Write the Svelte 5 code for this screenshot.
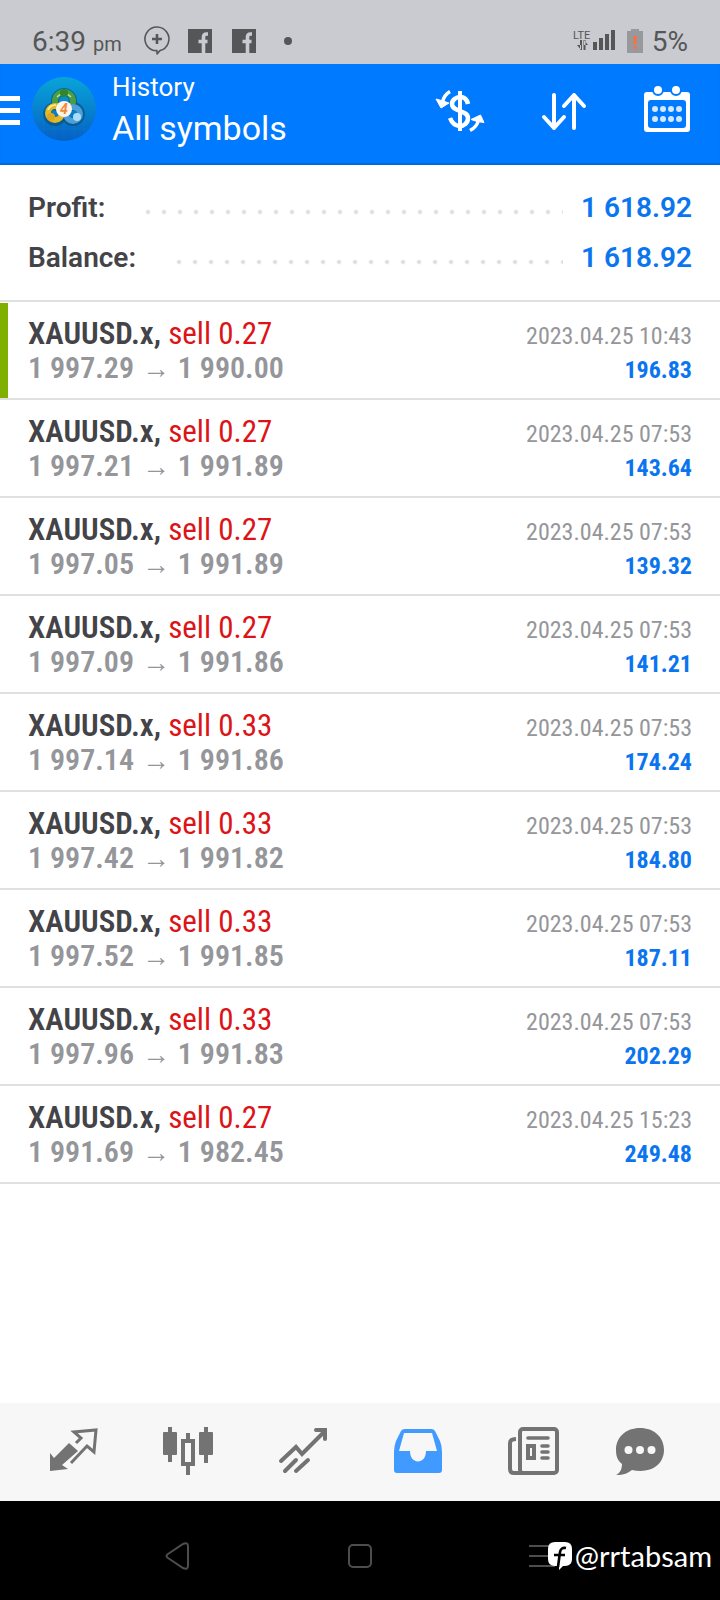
<script lang="ts">
    const totals = [
        { label: "Profit:", value: "1 618.92" },
        { label: "Balance:", value: "1 618.92" }
    ];

    const deals = [
        { volume: "0.27", open: "1 997.29", close: "1 990.00", time: "2023.04.25 10:43", profit: "196.83", fresh: true },
        { volume: "0.27", open: "1 997.21", close: "1 991.89", time: "2023.04.25 07:53", profit: "143.64" },
        { volume: "0.27", open: "1 997.05", close: "1 991.89", time: "2023.04.25 07:53", profit: "139.32" },
        { volume: "0.27", open: "1 997.09", close: "1 991.86", time: "2023.04.25 07:53", profit: "141.21" },
        { volume: "0.33", open: "1 997.14", close: "1 991.86", time: "2023.04.25 07:53", profit: "174.24" },
        { volume: "0.33", open: "1 997.42", close: "1 991.82", time: "2023.04.25 07:53", profit: "184.80" },
        { volume: "0.33", open: "1 997.52", close: "1 991.85", time: "2023.04.25 07:53", profit: "187.11" },
        { volume: "0.33", open: "1 997.96", close: "1 991.83", time: "2023.04.25 07:53", profit: "202.29" },
        { volume: "0.27", open: "1 991.69", close: "1 982.45", time: "2023.04.25 15:23", profit: "249.48" }
    ];
</script>

{#snippet facebook()}
    <svg width="24" height="24" viewBox="0 0 24 24">
        <path d="M0 0h24v24H0z" fill="#555657" />
        <path d="M20 5h-1.500q-3 0-3 3v16M10.500 12.500h9" fill="none" stroke="#c9cbd0" stroke-width="3.600" />
    </svg>
{/snippet}

<div class="screen">
    <div class="status">
        <span class="clock">6:39 <small>pm</small></span>
        <svg class="plus" width="26" height="30" viewBox="0 0 26 30" fill="none" stroke="#555657" stroke-width="2">
            <path d="M9.500 24.500A12 12 0 1 1 16 24.600L13 28v-3.400z" stroke-linejoin="round" stroke-width="1.600" />
            <path d="M13 8v10M8 13h10" stroke-width="2.600" />
        </svg>
        {@render facebook()}
        {@render facebook()}
        <i class="dot"></i>
        <span class="spacer"></span>
        <svg class="signal" width="43" height="22" viewBox="0 0 43 22" fill="#555657">
            <text x="0" y="9" font-size="11" font-family="Roboto, sans-serif">LTE</text>
            <path d="M7 10h2v10H7zM4 15l4 5v-5zM10.500 10h2v10h-2zM15 15l-4-5v5z" />
            <path d="M20 12h4v8h-4zM26 8h4v12h-4zM32 4h4v16h-4zM38 0h4v20h-4z" />
        </svg>
        <svg class="battery" width="16" height="24" viewBox="0 0 16 24">
            <path d="M4 0h8v2h4v22H0V2h4z" fill="#98999c" />
            <path d="M6.500 7h3v8h-3zM6.500 17h3v3h-3z" fill="#ff6e40" />
        </svg>
        <span class="percent">5%</span>
    </div>

    <header>
        <button class="menu" aria-label="Menu">
            <svg width="20" height="29" viewBox="0 0 20 29"><path d="M0 0h20v5H0zM0 12h20v5H0zM0 24h20v5H0z" fill="#fff" /></svg>
        </button>
        <svg class="logo" width="64" height="64" viewBox="0 0 64 64">
            <defs>
                <linearGradient id="sky" x1="0" y1="0" x2="0" y2="1">
                    <stop offset="0" stop-color="#08a5d8" />
                    <stop offset="1" stop-color="#0560c4" />
                </linearGradient>
            </defs>
            <circle cx="32" cy="32" r="32" fill="url(#sky)" />
            <path d="M12 8v48M22 3v58M32 0v64M42 3v58M52 8v48M8 12h48M3 22h58M0 32h64M3 42h58M8 52h48" stroke="#2b9fe0" stroke-opacity=".12" />
            <g fill="none" stroke="#0b4b6b" stroke-opacity=".6" stroke-width="8">
                <circle cx="32" cy="24" r="9" />
                <circle cx="23" cy="37" r="8" />
                <circle cx="41" cy="37" r="8" />
            </g>
            <g fill="none" stroke-width="6">
                <circle cx="32" cy="24" r="9" stroke="#4a9c45" />
                <circle cx="23" cy="36" r="7" stroke="#dfbb2a" />
                <circle cx="41" cy="37" r="7" stroke="#4c9fd8" />
            </g>
            <path d="M25 20q7-7 14 0" fill="none" stroke="#b5e38c" stroke-width="1.500" />
            <path d="M16 33q2-5 8-5" fill="none" stroke="#fff09a" stroke-width="1.500" />
            <circle cx="32" cy="16" r="4" fill="#2f8530" />
            <circle cx="19" cy="40" r="4" fill="#e0a51c" />
            <circle cx="45" cy="40" r="4" fill="#a9dcfa" />
            <circle cx="32" cy="32" r="8" fill="#fff4e6" />
            <text x="32" y="37" text-anchor="middle" font-size="14" font-weight="700" font-style="italic" font-family="Roboto, sans-serif" fill="#ef8a3c">4</text>
        </svg>
        <div class="title">
            <span>History</span>
            <h1>All symbols</h1>
        </div>
        <button class="tool" aria-label="Symbol">
            <svg width="48" height="48" viewBox="0 0 48 48" fill="none" stroke="#fff">
                <path d="M24 4v40" stroke-width="4" />
                <path d="M32 17C31 12 28 10 24 10s-8 3-8 7c0 8 16 6 16 14 0 5-4 8-8 8-5 0-8-3-10-8" stroke-width="4.500" />
                <path d="M14 4.500Q8 8 6.500 15" stroke-width="3.500" />
                <path d="M0 12l5 9 8-5-6-2z" fill="#fff" stroke="#fff" stroke-width="1" />
                <path d="M34 43.500Q41 40 42.500 33" stroke-width="3.500" />
                <path d="M48 35.500L44.500 28l-9.500 4.500 6 2z" fill="#fff" stroke="#fff" stroke-width="1" />
            </svg>
        </button>
        <button class="tool" aria-label="Sort">
            <svg width="48" height="48" viewBox="0 0 48 48" fill="none" stroke="#fff" stroke-width="4" stroke-linecap="round" stroke-linejoin="round">
                <path d="M14 8v33M4 30l10 11 10-11M34 41V8M24 19L34 8l10 11" />
            </svg>
        </button>
        <button class="tool" aria-label="Period">
            <svg width="48" height="48" viewBox="0 0 48 48">
                <rect x="0" y="5" width="46" height="40" rx="3" fill="#fff" />
                <rect x="4" y="13" width="38" height="28" rx="3" fill="#007aff" />
                <g fill="#fff" stroke="#007aff" stroke-width="2">
                    <circle cx="14" cy="3" r="5" />
                    <circle cx="32" cy="3" r="5" />
                </g>
                <g fill="#d3e8ff">
                    {#each [11, 19, 27, 35] as x}
                        <circle cx={x} cy="22" r="3" />
                        <circle cx={x} cy="32" r="3" />
                    {/each}
                </g>
            </svg>
        </button>
    </header>

    <main>
        <dl>
            {#each totals as total}
                <div class="total">
                    <dt>{total.label}</dt>
                    <dd>{total.value}</dd>
                </div>
            {/each}
        </dl>
        <ul>
            {#each deals as deal}
                <li class:fresh={deal.fresh}>
                    <div class="line">
                        <span class="symbol"><b>XAUUSD.x,</b> <span class="side">sell {deal.volume}</span></span>
                        <time>{deal.time}</time>
                    </div>
                    <div class="line">
                        <span class="prices">{deal.open} <span class="arrow">→</span> {deal.close}</span>
                        <span class="profit">{deal.profit}</span>
                    </div>
                </li>
            {/each}
        </ul>
    </main>

    <nav class="tabs">
        <button aria-label="Quotes">
            <svg width="52" height="52" viewBox="0 0 52 52">
                <path d="M2 26l4 5 15-15 9 8-16 14 6 4-18 2z" fill="#737373" />
                <path d="M28 16l5-5-7-6 22-2-2 22-7-6-16 17" fill="none" stroke="#737373" stroke-width="3" />
            </svg>
        </button>
        <button aria-label="Charts">
            <svg width="52" height="52" viewBox="0 0 52 52" fill="#737373">
                <rect x="0" y="5" width="14" height="23" rx="1" />
                <rect x="36" y="5" width="14" height="23" rx="1" />
                <path d="M5 0h4v35H5zM41 0h4v36h-4zM23 6h4v8h-4zM23 37h4v11h-4z" />
                <rect x="20" y="14" width="10" height="23" fill="none" stroke="#737373" stroke-width="4" />
            </svg>
        </button>
        <button aria-label="Trade">
            <svg width="52" height="52" viewBox="0 0 52 52" fill="none" stroke="#737373" stroke-width="4" stroke-linecap="round">
                <path d="M3 34l15-14 6 7L47 4M38 3h9v9M7 44l11-11M18 44l12-11" />
            </svg>
        </button>
        <button class="active" aria-label="History">
            <svg width="52" height="52" viewBox="0 0 52 52">
                <path d="M12 2h26q3 0 4 2l5 10q2 5 2 11v18q0 3-3 3H4q-3 0-3-3V25q0-6 2-11L8 4q1-2 4-2z" fill="#409aff" />
                <path d="M11 6h28l5 18H33c0 14-16 14-16 0H6z" fill="#f7f7f7" />
            </svg>
        </button>
        <button aria-label="News">
            <svg width="52" height="52" viewBox="0 0 52 52" fill="none" stroke="#737373" stroke-width="4">
                <rect x="12" y="2" width="37" height="44" rx="3" />
                <path d="M8 12q-6 0-6 4v26q0 4 4 4h10" />
                <path d="M20 11h20M34 19h6M34 25h6M34 31h6" stroke-linecap="round" stroke-width="3.600" />
                <rect x="20" y="19" width="6" height="12" />
            </svg>
        </button>
        <button aria-label="Messages">
            <svg width="52" height="52" viewBox="0 0 52 52">
                <path d="M26 1C12 1 2 10 2 23c0 7 2 11 6 14 0 5-2 9-6 11 8 0 12-2 16-5 18 4 32-5 32-20C50 10 40 1 26 1z" fill="#737373" />
                <g fill="#f7f7f7">
                    <circle cx="14.500" cy="23" r="4" />
                    <circle cx="26" cy="23" r="4" />
                    <circle cx="37.500" cy="23" r="4" />
                </g>
            </svg>
        </button>
    </nav>

    <div class="system">
        <button aria-label="Back">
            <svg width="26" height="26" viewBox="0 0 26 26"><path d="M3 11L18 1q5-2 5 2v20q0 4-5 2L3 15q-3-2 0-4z" /></svg>
        </button>
        <button aria-label="Home">
            <svg width="26" height="26" viewBox="0 0 26 26"><rect x="2" y="2" width="22" height="22" rx="4" /></svg>
        </button>
        <button aria-label="Recent apps">
            <svg width="26" height="26" viewBox="0 0 26 26"><path d="M0 3h26M0 13h26M0 23h26" /></svg>
        </button>
        <div class="handle">
            <svg width="24" height="28" viewBox="0 0 24 28">
                <path d="M7 0h10q7 0 7 7v10q0 7-7 7h-2l-4 4v-4H7q-7 0-7-7V7q0-7 7-7z" fill="#fff" />
                <path d="M18 6q-5-1-6 4l-2 15M6 13h11" fill="none" stroke="#000" stroke-width="2.600" />
            </svg>
            <span>@rrtabsam</span>
        </div>
    </div>
</div>

<style>
    :global(body) {
        background: #fff;
    }
    .screen {
        display: flex;
        flex-direction: column;
        min-height: 100vh;
        font-family: Roboto, sans-serif;
        color: #434348;
    }
    svg {
        display: block;
        flex: none;
        overflow: visible;
    }
    button {
        display: flex;
        align-items: center;
        justify-content: center;
        padding: 0;
        border: 0;
        background: none;
        cursor: pointer;
    }
    .status {
        display: flex;
        align-items: center;
        height: 46px;
        padding: 18px 32px 0;
        background: #c9cbd0;
        color: #555657;
        font-size: 28px;
    }
    .clock small {
        font-size: 20px;
    }
    .plus {
        margin: 0 18px 0 22px;
    }
    .status svg + svg {
        margin-right: 20px;
    }
    .dot {
        width: 8px;
        height: 8px;
        margin-left: 8px;
        border-radius: 50%;
        background: #555657;
    }
    .spacer {
        flex: 1;
    }
    .status .signal {
        margin-right: 11px;
    }
    .status .battery {
        margin-right: 9px;
    }
    header {
        display: flex;
        align-items: center;
        height: 101px;
        background: #007aff;
        box-shadow: inset 0 -2px 1px #0069dd;
        color: #fff;
    }
    .menu {
        margin-right: 12px;
    }
    .logo {
        margin-bottom: 12px;
    }
    .menu, .tool {
        padding-bottom: 8px;
    }
    .title {
        flex: 1;
        margin: 0 0 10px 16px;
        font-size: 26px;
        line-height: 36px;
    }
    h1 {
        margin: 0;
        font-size: 34px;
        font-weight: 400;
        line-height: 46px;
    }
    .tool {
        width: 104px;
    }
    main {
        flex: 1;
    }
    dl {
        margin: 0;
        padding: 18px 28px 17px;
        border-bottom: 2px solid #e0e0e0;
        font-size: 28px;
        font-weight: 600;
        line-height: 50px;
    }
    .total {
        display: flex;
    }
    dd {
        margin: 0;
        color: #0b75f0;
    }
    .total dt {
        flex: 1;
        display: flex;
    }
    /* dot leader between label and value */
    .total dt::after {
        content: "";
        flex: 1;
        margin: 0 18px 0 35px;
        background: radial-gradient(circle, #dcdcdc 1px, transparent 3px) 0 21px / 16px 16px repeat-x;
    }
    ul {
        margin: 0;
        padding: 0;
        list-style: none;
    }
    li {
        padding: 15px 28px 13px;
        border-bottom: 2px solid #e0e0e0;
        font-family: "Roboto Condensed", "Liberation Sans Narrow", Roboto, sans-serif;
        line-height: 34px;
    }
    .fresh {
        background: linear-gradient(#7fb000, #7fb000) 0 1px / 8px 100% no-repeat;
    }
    .line {
        display: flex;
        justify-content: space-between;
        align-items: baseline;
        height: 34px;
    }
    .symbol {
        font-size: 31px;
    }
    .symbol b {
        font-weight: 600;
    }
    .side {
        color: #dc1418;
    }
    .prices {
        color: #95969a;
        font-size: 30px;
        font-weight: 600;
    }
    .arrow {
        margin: 0 1px;
        font-family: "Liberation Serif", serif;
        font-size: 28px;
        font-weight: 400;
        line-height: 20px;
    }
    time, .profit {
        font-size: 24px;
    }
    time {
        color: #95969a;
    }
    .profit {
        color: #0b75f0;
        font-weight: 700;
    }
    .tabs {
        display: grid;
        grid-template-columns: repeat(5, 6fr) 5fr;
        height: 98px;
        padding: 0 32px 0 16px;
        background: #f7f7f7;
    }
    .tabs button {
        padding-top: 2px;
    }
    .system {
        position: relative;
        display: grid;
        grid-template-columns: repeat(3, 1fr);
        height: 99px;
        padding: 0 12%;
        background: #000;
    }
    .system button svg {
        margin-top: 10px;
        fill: none;
        stroke: #4d4d4d;
        stroke-width: 2px;
    }
    .handle {
        position: absolute;
        right: 8px;
        bottom: 28px;
        display: flex;
        align-items: center;
        gap: 3px;
        color: #fff;
        font-family: Lato, sans-serif;
        font-size: 29px;
        line-height: 32px;
    }
</style>
